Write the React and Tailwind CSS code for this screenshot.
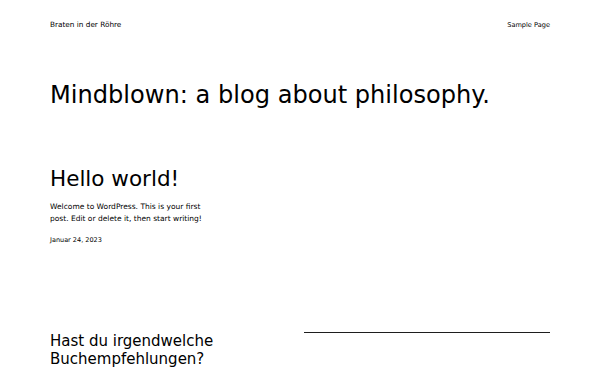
export default function App() {
  return (
    <div
      className="min-h-screen bg-white px-[50px] text-black"
      style={{ fontFamily: '"DejaVu Sans", sans-serif' }}
    >
      {/* Header */}
      <header className="flex items-baseline justify-between pt-[21px] leading-none">
        <a href="#" className="text-[7.3px]">Braten in der Röhre</a>
        <a href="#" className="text-[6.6px]">Sample Page</a>
      </header>

      <h1 className="mt-[52px] text-[24.1px] leading-[29px]">Mindblown: a blog about philosophy.</h1>

      {/* Post */}
      <article className="mt-[56px]">
        <h2 className="text-[21.5px] leading-[25px]">Hello world!</h2>
        <p className="mt-[10px] max-w-[160px] text-[7.5px] leading-[12px]">
          Welcome to WordPress. This is your first post. Edit or delete it, then start writing!
        </p>
        <div className="mt-[12px] text-[6.5px] leading-none">Januar 24, 2023</div>
      </article>

      {/* Footer teaser */}
      <section className="mt-[89px] grid grid-cols-2 gap-[8px]">
        <h3 className="text-[15px] leading-[18px]">Hast du irgendwelche Buchempfehlungen?</h3>
        <div className="border-t border-[#1e1e1e]"></div>
      </section>
    </div>
  );
}
